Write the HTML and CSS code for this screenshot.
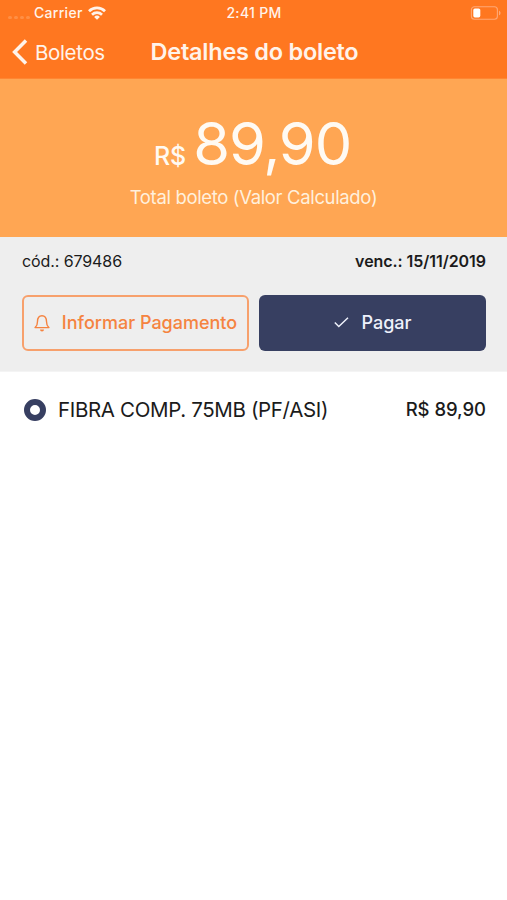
FILE: index.html
```html
<!DOCTYPE html>
<html lang="pt-BR">
<head>
<meta charset="utf-8">
<title>Detalhes do boleto</title>
<link rel="stylesheet" href="styles.css">
</head>
<body>
<header class="header">
  <div class="status">
    <div class="status-left">
      <span class="signal"><i></i><i></i><i></i><i></i></span>
      <span class="carrier">Carrier</span>
      <svg class="wifi" viewBox="0 0 18 14" width="18" height="14"><g fill="none" stroke="currentColor" stroke-width="2.7"><path d="M1 5.2a11.3 11.3 0 0 1 16 0"/><path d="M4 8.7a7.1 7.1 0 0 1 10 0"/></g><path d="M9 13.7 6.1 10.9a4.1 4.1 0 0 1 5.8 0z" fill="currentColor"/></svg>
    </div>
    <span class="time">2:41 PM</span>
    <svg class="battery" viewBox="0 0 31 14" width="31" height="14"><rect x="1.4" y=".7" width="26" height="12.6" rx="3" fill="none" stroke="#ffa875" stroke-width="1.1"/><rect x="3.3" y="2.4" width="7" height="9" rx="1.6" fill="#fff"/><path d="M29 4.7c2 .7 2 3.9 0 4.6z" fill="#ffa875"/></svg>
  </div>
  <nav class="nav">
    <a class="back"><svg viewBox="0 0 16 26" width="16" height="26"><path d="M14 1.5 2.6 13 14 24.500" fill="none" stroke="currentColor" stroke-width="3.5"/></svg><span>Boletos</span></a>
    <h1 class="title">Detalhes do boleto</h1>
  </nav>
</header>
<section class="total">
  <div class="amount"><span class="currency">R$</span><span class="value">89,90</span></div>
  <div class="caption">Total boleto (Valor Calculado)</div>
</section>
<section class="info">
  <div class="meta"><span class="code">cód.: 679486</span><span class="due">venc.: 15/11/2019</span></div>
  <div class="actions">
    <button class="btn outline"><svg viewBox="0 0 16 18" width="16" height="18"><path d="M1 13.6h14M1.300 13.400c1.700-1.400 2.200-2.800 2.200-5.800C3.500 3.900 5.200 1.700 8 1.700s4.500 2.200 4.500 5.900c0 3 .5 4.400 2.200 5.800" fill="none" stroke="currentColor" stroke-width="1.4" stroke-linecap="round" stroke-linejoin="round"/><path d="M6 15.500h4a2 2 0 0 1-4 0z" fill="currentColor"/></svg><span class="inform">Informar Pagamento</span></button>
    <button class="btn solid"><svg viewBox="0 0 16 12" width="16" height="12"><path d="m1.800 5.500 4 4L15 .8" fill="none" stroke="currentColor" stroke-width="1.5"/></svg><span class="pay">Pagar</span></button>
  </div>
</section>
<main class="item">
  <span class="ring"></span>
  <span class="name">FIBRA COMP. 75MB (PF/ASI)</span>
  <span class="price">R$ 89,90</span>
</main>
</body>
</html>
```

FILE: styles.css
```css
* { box-sizing: border-box; }
body { margin: 0; min-height: 900px; background: #fff; color: #1b1b1b; font-family: Inter, "Liberation Sans", sans-serif; }
svg { display: block; flex: none; }
span { white-space: nowrap; }
.header { height: 79px; background: #ff7720; color: #fff3ea; border-bottom: 1px solid #ff8632; }
.status { display: grid; grid-template-columns: 1fr auto 1fr; align-items: center; height: 25px; padding: 0 6px 0 8px; }
.status-left { display: flex; align-items: center; }
.signal { display: flex; gap: 2px; width: 26px; padding-top: 9px; }
.signal i { width: 4px; height: 3px; border-radius: 2px; background: #ff8f45; }
.carrier { font-size: 14px; font-weight: 500; letter-spacing: .3px; }
.wifi { margin-left: 5px; }
.time { margin-right: 1px; font-size: 14px; font-weight: 500; letter-spacing: .3px; }
.battery { justify-self: end; }
.nav { display: grid; grid-template-columns: 1fr auto 1fr; align-items: center; height: 54px; padding: 0 12px; }
.back { display: flex; align-items: center; gap: 7px; font-size: 20.5px; letter-spacing: -.35px; }
.title { margin: 0 -1px 0 1px; font-size: 23.5px; line-height: 28px; font-weight: 600; letter-spacing: -.25px; }
.total { height: 158px; padding-top: 26px; background: #ffa653; color: #fffaf3; text-align: center; }
.amount { display: flex; justify-content: center; align-items: baseline; gap: 7px; height: 79px; padding-right: 2px; line-height: 76px; }
.currency { font-size: 25px; font-weight: 500; }
.value { font-size: 59.5px; font-weight: 400; letter-spacing: -1.1px; }
.caption { height: 26px; line-height: 26px; font-size: 18.5px; letter-spacing: -.35px; color: #fff0dd; }
.info { height: 135px; padding: 12px 21px 0 22px; background: #eee; border-bottom: 1px solid #f4f4f4; }
.meta { display: flex; justify-content: space-between; height: 24px; line-height: 24px; font-size: 16px; }
.code { letter-spacing: -.1px; }
.due { font-weight: 600; letter-spacing: -.06px; }
.actions { display: grid; grid-template-columns: 1fr 1fr; gap: 10px; margin-top: 22px; }
.btn { display: flex; align-items: center; justify-content: center; gap: 12px; height: 56px; padding: 0 0 1px; border: 0; border-radius: 6px; font: 500 18px Inter, "Liberation Sans", sans-serif; }
.outline { background: transparent; border: 2px solid #f7a06c; color: #f58340; }
.solid { background: #373f61; color: #eef1fb; }
.item { display: flex; align-items: center; height: 75px; padding: 0 21px 0 24px; }
.ring { width: 22px; height: 22px; border: 6px solid #373f61; border-radius: 50%; }
.name { margin: -1px 0 0 12px; font-size: 20.5px; letter-spacing: -.35px; }
.price { margin: -2px 0 0 auto; font-size: 18.5px; font-weight: 500; letter-spacing: -.05px; }
```
